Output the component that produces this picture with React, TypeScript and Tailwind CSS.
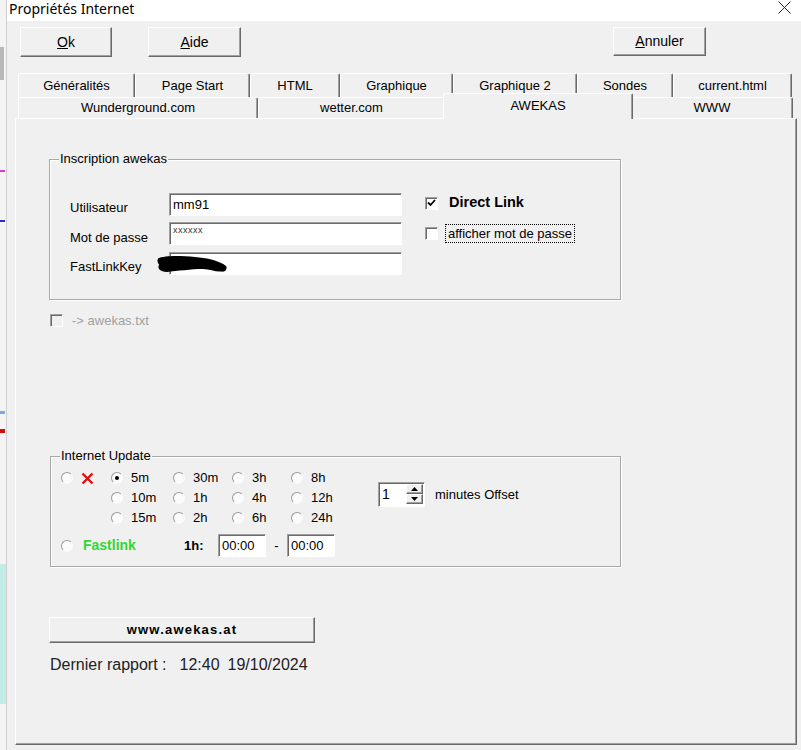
import React from 'react'

const raised  = 'border border-t-white border-l-white border-r-[#696969] border-b-[#696969] shadow-[inset_-1px_-1px_0_#a0a0a0]'
const sunken  = 'border border-t-[#a0a0a0] border-l-[#a0a0a0] border-r-white border-b-white shadow-[inset_1px_1px_0_#696969]'
const tabEdge = 'border-t border-l border-r border-t-white border-l-white border-r-[#696969] shadow-[inset_-1px_0_0_#a0a0a0] rounded-t-[2px]'

function Radio({ checked = false }: { checked?: boolean }) {
  return (
    <span className="flex h-[12px] w-[12px] shrink-0 items-center justify-center rounded-full border border-t-[#9a9a9a] border-l-[#9a9a9a] border-r-[#fafafa] border-b-[#fafafa] bg-[#fbfbfb]">
      {checked && <span className="h-[4px] w-[4px] rounded-full bg-black" />}
    </span>
  )
}

function Opt({ label, w, checked = false }: { label: string; w: string; checked?: boolean }) {
  return (
    <div className={`flex h-[20px] items-center ${w}`}>
      <Radio checked={checked} />
      <span className="ml-[8px]">{label}</span>
    </div>
  )
}

function Tab({ label, w, h }: { label: string; w: string; h: string }) {
  return (
    <div className={`flex items-center justify-center ${w} ${h} ${tabEdge}`}>
      {label}
    </div>
  )
}

function Check({ checked = false, disabled = false }: { checked?: boolean; disabled?: boolean }) {
  return (
    <span className={`flex h-[13px] w-[13px] shrink-0 items-center justify-center ${sunken} ${disabled ? 'bg-[#f0f0f0]' : 'bg-white'}`}>
      {checked && (
        <svg width="9" height="8" viewBox="0 0 9 8">
          <path d="M1 3.5 L3.5 6 L8 1" fill="none" stroke="#000" strokeWidth="1.8" />
        </svg>
      )}
    </span>
  )
}

function GroupBox({ title, className, children }: { title: string; className: string; children: React.ReactNode }) {
  return (
    <div className={`relative border border-[#a8a8a8] shadow-[1px_1px_0_#fff,inset_1px_1px_0_#fff] ${className}`}>
      <span className="absolute -top-[9px] left-[9px] bg-[#f0f0f0] px-[1px] leading-[16px]">{title}</span>
      {children}
    </div>
  )
}

export default function App() {
  return (
    <div className="flex h-[750px] w-[801px] overflow-hidden bg-[#f0f0f0] font-['Liberation_Sans',Arial,sans-serif] text-[13px] text-black">
      {/* fenêtre en arrière-plan */}
      <div className="flex h-full w-[7px] flex-col border-r border-[#cfcfcf] bg-[#f4f4f4]">
        <div className="h-[47px]" />
        <div className="h-[33px] w-[4px] bg-[#b8b8b8]" />
        <div className="h-[90px]" />
        <div className="h-[2px] w-[5px] bg-[#d040c8]" />
        <div className="h-[48px]" />
        <div className="h-[2px] w-[5px] bg-[#2030c0]" />
        <div className="h-[189px]" />
        <div className="h-[3px] w-[5px] bg-[#80a8e0]" />
        <div className="h-[15px]" />
        <div className="h-[4px] w-[5px] bg-[#d01010]" />
        <div className="h-[131px]" />
        <div className="h-[140px] w-[6px] bg-[#c4ece6]" />
      </div>

      <div className="flex flex-1 flex-col">
        {/* Barre de titre */}
        <div className="flex h-[21px] items-center justify-between bg-white pl-[2px] pr-[10px]">
          <span className="-mt-[4px] font-['Noto_Sans',sans-serif] text-[14px] leading-none">Propriétés Internet</span>
          <svg width="13" height="13" viewBox="0 0 13 13" className="-mt-[6px]">
            <path d="M0.5 0.5 L12.5 12.5 M12.5 0.5 L0.5 12.5" stroke="#222" strokeWidth="1" />
          </svg>
        </div>

        {/* Boutons */}
        <div className="flex pl-[13px] pt-[6px]">
          <button className={`flex h-[30px] w-[92px] items-center justify-center bg-[#f0f0f0] text-[14px] ${raised}`}>
            <span><u>O</u>k</span>
          </button>
          <button className={`ml-[36px] flex h-[30px] w-[93px] items-center justify-center bg-[#f0f0f0] text-[14px] ${raised}`}>
            <span><u>A</u>ide</span>
          </button>
          <button className={`ml-[372px] flex h-[29px] w-[93px] items-center justify-center bg-[#f0f0f0] text-[14px] ${raised}`}>
            <span><u>A</u>nnuler</span>
          </button>
        </div>

        {/* Onglets */}
        <div className="ml-[8px] mt-[16px] w-[782px]">
          <div className="flex h-[24px] pl-[3px]">
            <Tab label="Généralités" w="w-[117px]" h="h-[24px]" />
            <Tab label="Page Start" w="w-[115px]" h="h-[24px]" />
            <Tab label="HTML" w="w-[90px]" h="h-[24px]" />
            <Tab label="Graphique" w="w-[113px]" h="h-[24px]" />
            <Tab label="Graphique 2" w="w-[124px]" h="h-[24px]" />
            <Tab label="Sondes" w="w-[96px]" h="h-[24px]" />
            <Tab label="current.html" w="w-[119px]" h="h-[24px]" />
          </div>
          <div className="flex h-[21px] items-start pl-[3px]">
            <Tab label="Wunderground.com" w="w-[240px]" h="h-[21px]" />
            <Tab label="wetter.com" w="w-[187px]" h="h-[21px]" />
            <div className={`relative z-10 -mx-[2px] -mt-[4px] flex h-[26px] w-[190px] items-start justify-center bg-[#f0f0f0] pt-[4px] leading-[15px] ${tabEdge}`}>
              AWEKAS
            </div>
            <Tab label="WWW" w="w-[162px]" h="h-[21px]" />
          </div>

          {/* Panneau */}
          <div className={`flex h-[627px] flex-col ${raised}`}>
            <GroupBox title="Inscription awekas" className="ml-[33px] mt-[40px] h-[141px] w-[572px]">
              <div className="flex pl-[20px] pt-[33px]">
                <div className="flex flex-col">
                  <div className="flex h-[23px]">
                    <span className="w-[99px] pt-[7px] leading-[16px]">Utilisateur</span>
                    <div className={`h-[23px] w-[233px] bg-white pl-[3px] pt-[3px] leading-[16px] ${sunken}`}>mm91</div>
                  </div>
                  <div className="mt-[6px] flex h-[23px]">
                    <span className="w-[99px] pt-[8px] leading-[16px]">Mot de passe</span>
                    <div className={`h-[23px] w-[233px] bg-white pl-[3px] pt-[2px] text-[9px] leading-[10px] tracking-[0.5px] text-[#333] ${sunken}`}>xxxxxx</div>
                  </div>
                  <div className="relative mt-[7px] flex h-[23px]">
                    <span className="w-[99px] pt-[7px] leading-[16px]">FastLinkKey</span>
                    <div className={`h-[23px] w-[233px] bg-white ${sunken}`} />
                    <svg width="76" height="22" viewBox="0 0 76 22" className="absolute left-[85px] top-[1px]">
                      <path d="M3 6 C 10 2, 26 3, 40 4 C 52 5, 60 7, 66 10 C 71 12, 73 16, 69 18 C 62 20, 56 16, 48 16 C 36 16, 22 18, 12 19 C 5 19, 2 15, 4 12 Z" fill="#000" />
                      <path d="M6 8 C 20 6, 44 8, 68 15" fill="none" stroke="#000" strokeWidth="7" strokeLinecap="round" />
                    </svg>
                  </div>
                </div>
                <div className="ml-[23px] flex flex-col">
                  <div className="mt-[3px] flex h-[14px] items-center">
                    <Check checked />
                    <span className="ml-[11px] text-[14.5px] font-bold">Direct Link</span>
                  </div>
                  <div className="mt-[16px] flex h-[14px] items-center">
                    <Check />
                    <span className="ml-[7px] border border-dotted border-black px-[2px] leading-[17px]">afficher mot de passe</span>
                  </div>
                </div>
              </div>
            </GroupBox>

            <div className="ml-[34px] mt-[14px] flex h-[13px] items-center">
              <Check disabled />
              <span className="ml-[9px] text-[#a0a0a0]">-&gt; awekas.txt</span>
            </div>

            <GroupBox title="Internet Update" className="ml-[34px] mt-[129px] h-[111px] w-[571px]">
              <div className="flex flex-col pl-[10px] pt-[11px]">
                <div className="flex">
                  <div className="flex flex-col">
                    <div className="flex">
                      <div className="flex h-[20px] w-[50px] items-center">
                        <Radio />
                        <svg width="13" height="13" viewBox="0 0 13 13" className="ml-[8px]">
                          <path d="M1.5 1.5 L11.5 11.5 M11.5 1.5 L1.5 11.5" stroke="#e01010" strokeWidth="2.4" />
                        </svg>
                      </div>
                      <Opt label="5m" w="w-[62px]" checked />
                      <Opt label="30m" w="w-[59px]" />
                      <Opt label="3h" w="w-[59px]" />
                      <Opt label="8h" w="w-[87px]" />
                    </div>
                    <div className="flex">
                      <div className="w-[50px]" />
                      <Opt label="10m" w="w-[62px]" />
                      <Opt label="1h" w="w-[59px]" />
                      <Opt label="4h" w="w-[59px]" />
                      <Opt label="12h" w="w-[87px]" />
                    </div>
                    <div className="flex">
                      <div className="w-[50px]" />
                      <Opt label="15m" w="w-[62px]" />
                      <Opt label="2h" w="w-[59px]" />
                      <Opt label="6h" w="w-[59px]" />
                      <Opt label="24h" w="w-[87px]" />
                    </div>
                  </div>
                  <div className="mt-[14px] flex h-[25px] items-center">
                    <div className={`flex h-[25px] w-[47px] bg-white ${sunken}`}>
                      <span className="flex-1 pl-[3px] pt-[3px] text-[14px] leading-[16px]">1</span>
                      <div className="mr-[1px] mt-[1px] flex w-[17px] flex-col">
                        <div className={`flex h-[10px] items-center justify-center bg-[#f0f0f0] ${raised}`}>
                          <svg width="7" height="4" viewBox="0 0 7 4"><path d="M0 4 L3.5 0 L7 4 Z" fill="#000" /></svg>
                        </div>
                        <div className={`flex h-[10px] items-center justify-center bg-[#f0f0f0] ${raised}`}>
                          <svg width="7" height="4" viewBox="0 0 7 4"><path d="M0 0 L3.5 4 L7 0 Z" fill="#000" /></svg>
                        </div>
                      </div>
                    </div>
                    <span className="ml-[10px]">minutes Offset</span>
                  </div>
                </div>

                <div className="mt-[6px] flex h-[23px] items-center">
                  <Radio />
                  <span className="ml-[10px] w-[101px] text-[14px] font-bold text-[#33d633]">Fastlink</span>
                  <span className="w-[34px] font-bold">1h:</span>
                  <div className={`h-[23px] w-[48px] bg-white pl-[3px] pt-[3px] leading-[16px] ${sunken}`}>00:00</div>
                  <span className="w-[21px] text-center">-</span>
                  <div className={`h-[23px] w-[48px] bg-white pl-[3px] pt-[3px] leading-[16px] ${sunken}`}>00:00</div>
                </div>
              </div>
            </GroupBox>

            <button className={`ml-[33px] mt-[50px] flex h-[26px] w-[266px] items-center justify-center bg-[#f0f0f0] text-[13px] font-bold tracking-[1.2px] ${raised}`}>
              www.awekas.at
            </button>

            <div className="ml-[34px] mt-[13px] flex text-[16px] leading-[18px] text-[#222]">
              <span>Dernier rapport :</span>
              <span className="ml-[13px]">12:40</span>
              <span className="ml-[8px]">19/10/2024</span>
            </div>
          </div>
        </div>
      </div>
    </div>
  )
}
